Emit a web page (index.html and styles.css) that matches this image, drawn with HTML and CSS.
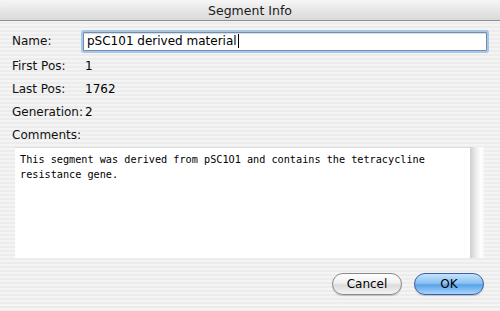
FILE: index.html
```html
<!DOCTYPE html>
<html lang="en">
<head>
    <meta charset="UTF-8">
    <meta name="viewport" content="width=device-width, initial-scale=1.0">
    <link rel="stylesheet" href="styles.css">
    <title>Segment Info</title>
</head>
<body>
    <div id="window">
        <div id="titlebar">Segment Info</div>

        <div id="content">
            <div class="row name-row">
                <span class="label">Name:</span>
                <div class="name-field">pSC101 derived material<span class="caret"></span></div>
            </div>
            <div class="row">
                <span class="label">First Pos:</span>
                <span class="value">1</span>
            </div>
            <div class="row">
                <span class="label">Last Pos:</span>
                <span class="value">1762</span>
            </div>
            <div class="row">
                <span class="label">Generation:</span>
                <span class="value">2</span>
            </div>
            <div class="row">
                <span class="label">Comments:</span>
            </div>

            <div id="comments">
                <div class="comments-text">This segment was derived from pSC1O1 and contains the tetracycline resistance gene.</div>
                <div class="scrollbar"></div>
            </div>

            <div id="buttons">
                <button class="btn">Cancel</button>
                <button class="btn btn-default">OK</button>
            </div>
        </div>
    </div>
</body>
</html>
```

FILE: styles.css
```css
/* Aqua style sheet dialog */
body {
    margin: 0;
    font-family: "DejaVu Sans", sans-serif;
    font-size: 12px;
    color: #000000;
}

#window {
    width: 500px;
    height: 311px;
    background: repeating-linear-gradient(#f4f4f4 0 2px, #ececec 2px 4px);
    overflow: hidden;
}

#titlebar {
    height: 20px;
    line-height: 21px;
    text-align: center;
    font-size: 12.5px;
    color: #1a1a1a;
    border-radius: 6px 6px 0 0;
    background: linear-gradient(#f6f6f6, #e4e4e4 60%, #dadada);
    border-bottom: 1px solid #8e8e8e;
}

#content {
    padding: 9px 12px 0 12px;
}

.row {
    display: flex;
    align-items: center;
    height: 23px;
}

.name-row {
    height: 24px;
    align-items: flex-start;
}

.name-row .label {
    margin-top: 4px;
}

.label {
    width: 72px;
    flex-shrink: 0;
    color: #111111;
}

.value {
    margin-left: 1px;
}

.name-field {
    width: 399px;
    height: 17px;
    line-height: 17px;
    padding-left: 3px;
    margin-left: -1px;
    background: #ffffff;
    border: 1px solid #6d8fb4;
    box-shadow: 0 0 0 2px #a9c6e4, inset 0 1px 1px rgba(0, 0, 0, 0.15);
    border-radius: 1px;
    margin-top: 2px;
}

.caret {
    display: inline-block;
    width: 1px;
    height: 14px;
    background: #000000;
    vertical-align: -3px;
    margin-left: 1px;
}

#comments {
    display: flex;
    margin: 1px 0 0 3px;
    width: 469px;
    height: 111px;
}

.comments-text {
    flex: 1;
    background: #ffffff;
    padding: 5px 5px;
    font-family: "DejaVu Sans Mono", monospace;
    font-size: 10.2px;
    line-height: 15px;
    box-shadow: inset 0 1px 0 #dcdcdc;
}

.scrollbar {
    width: 14px;
    background: linear-gradient(to right, #cfcfcf, #ebebeb 40%, #ffffff 80%, #f6f6f6);
}

#buttons {
    display: flex;
    justify-content: flex-end;
    gap: 12px;
    margin-top: 15px;
    padding-right: 4px;
}

.btn {
    width: 70px;
    height: 22px;
    border-radius: 11px;
    font-family: "DejaVu Sans", sans-serif;
    font-size: 12px;
    color: #000000;
    border: 1px solid #8a8a8a;
    background: linear-gradient(#ffffff, #f0f0f0 45%, #dcdcdc 55%, #f4f4f4);
    box-shadow: 0 1px 1px rgba(0, 0, 0, 0.2);
    padding: 0;
}

.btn-default {
    border-color: #3b5fa8;
    background: linear-gradient(#c6e2fb, #8cc3f3 45%, #5aa3ea 55%, #a7d6fc);
}
```
